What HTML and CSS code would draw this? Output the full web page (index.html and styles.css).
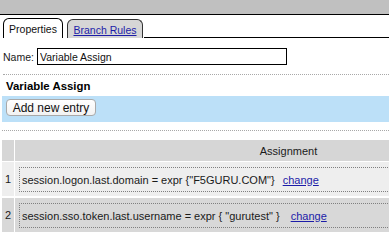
FILE: index.html
```html
<!DOCTYPE html>
<html>
<head>
<meta charset="utf-8">
<link rel="stylesheet" href="styles.css">
</head>
<body>
<div class="topbar"></div>
<div class="tabs">
  <div class="tab tab-active">Properties</div>
  <div class="tab tab-other"><a href="#" class="tab-link">Branch Rules</a></div>
  <div class="tab-fill"></div>
</div>
<div class="name-row">
  <label class="name-label">Name:</label>
  <input class="name-input" type="text" value="Variable Assign">
</div>
<div class="sep sep-first"></div>
<div class="section-title">Variable Assign</div>
<div class="toolbar"><button class="btn">Add new entry</button></div>
<div class="sep sep-second"></div>
<div class="grid-wrap">
<table class="grid">
  <thead>
    <tr><th class="num-col"></th><th class="assign-col">Assignment</th></tr>
  </thead>
  <tbody>
    <tr class="row-odd">
      <td class="num-cell">1</td>
      <td class="val-cell"><div class="val-box">session.logon.last.domain = expr {"F5GURU.COM"}<a href="#" class="change-link">change</a></div></td>
    </tr>
    <tr class="row-even">
      <td class="num-cell">2</td>
      <td class="val-cell"><div class="val-box">session.sso.token.last.username = expr { "gurutest" } <a href="#" class="change-link">change</a></div></td>
    </tr>
  </tbody>
</table>
</div>
</body>
</html>
```
FILE: styles.css
```css
html { overflow: hidden; }
body {
  margin: 0;
  background: #fff;
  font-family: "Liberation Sans", Arial, sans-serif;
  font-size: 11px;
  color: #1a1a1a;
}
.topbar {
  height: 14px;
  background: #c0c0c0;
  border-bottom: 1px solid #000;
}
.tabs {
  display: flex;
  align-items: flex-end;
  height: 23px;
  padding-left: 3px;
}
.tab {
  box-sizing: border-box;
  font-size: 10.5px;
  display: flex;
  align-items: center;
  justify-content: center;
}
.tab-active {
  width: 60px;
  height: 20px;
  border: 1px solid #000;
  border-bottom: none;
  border-radius: 6px 6px 0 0;
  background: #fff;
  color: #111;
  padding-top: 1px;
}
.tab-other {
  width: 76px;
  height: 19px;
  margin-left: 4px;
  border: 1px solid #333;
  border-bottom: none;
  border-radius: 6px 6px 0 0;
  background: #d6d6d6;
  padding-top: 1px;
}
.tab-link { color: #1c1ca8; text-decoration: underline; }
.tab-fill {
  flex: 1;
  height: 20px;
  margin-left: 1px;
  border-bottom: 1px solid #000;
}
.name-row {
  display: flex;
  align-items: center;
  padding: 10px 0 0 3px;
  height: 17px;
}
.name-label { font-size: 10.5px; width: 34px; }
.name-input {
  box-sizing: border-box;
  width: 250px;
  height: 17px;
  margin: 0;
  border: 1px solid #000;
  padding: 0 2px;
  font-family: "Liberation Sans", Arial, sans-serif;
  font-size: 10.5px;
  color: #111;
  outline: none;
}
.sep { border-top: 1px dotted #a8a8a8; }
.sep-first { margin: 9px 0 0 3px; }
.section-title {
  height: 21px;
  line-height: 22px;
  padding-left: 6px;
  font-weight: bold;
  font-size: 11.4px;
  color: #000;
}
.toolbar {
  margin-left: 2px;
  height: 26px;
  background: #bce0f8;
  padding: 3px 0 0 4px;
  box-sizing: border-box;
}
.btn {
  box-sizing: border-box;
  width: 90px;
  height: 17px;
  margin: 0;
  padding: 0;
  border: 1px solid #a9a9a9;
  border-radius: 4px;
  background: linear-gradient(#ffffff, #f2f2f2);
  font-family: "Liberation Sans", Arial, sans-serif;
  font-size: 12px;
  color: #111;
}
.sep-second { margin: 8px 0 0 2px; }
.grid-wrap {
  overflow: hidden;
  margin-top: 8px;
}
.grid {
  margin-left: 1px;
  width: 562px;
  border-collapse: separate;
  border-spacing: 1px;
}
.grid th {
  height: 21px;
  padding: 0;
  background: #d6d6d6;
  font-weight: normal;
  font-size: 11px;
}
.num-col { width: 12px; }
.assign-col { text-align: center; }
.grid td { padding: 0; }
.num-cell {
  width: 12px;
  text-align: center;
  vertical-align: middle;
}
.val-cell { padding: 5px 0 4px 4px !important; }
.row-odd td { background: #eeeeee; border-bottom: 1px solid #fff; }
.row-even td { background: #d8d8d8; }
.val-box {
  box-sizing: border-box;
  height: 25px;
  border: 1px dotted #808080;
  border-right: none;
  padding-left: 2px;
  display: flex;
  align-items: center;
  white-space: pre;
}
.change-link {
  margin-left: 8px;
  color: #1c1ca8;
  text-decoration: underline;
}
```
